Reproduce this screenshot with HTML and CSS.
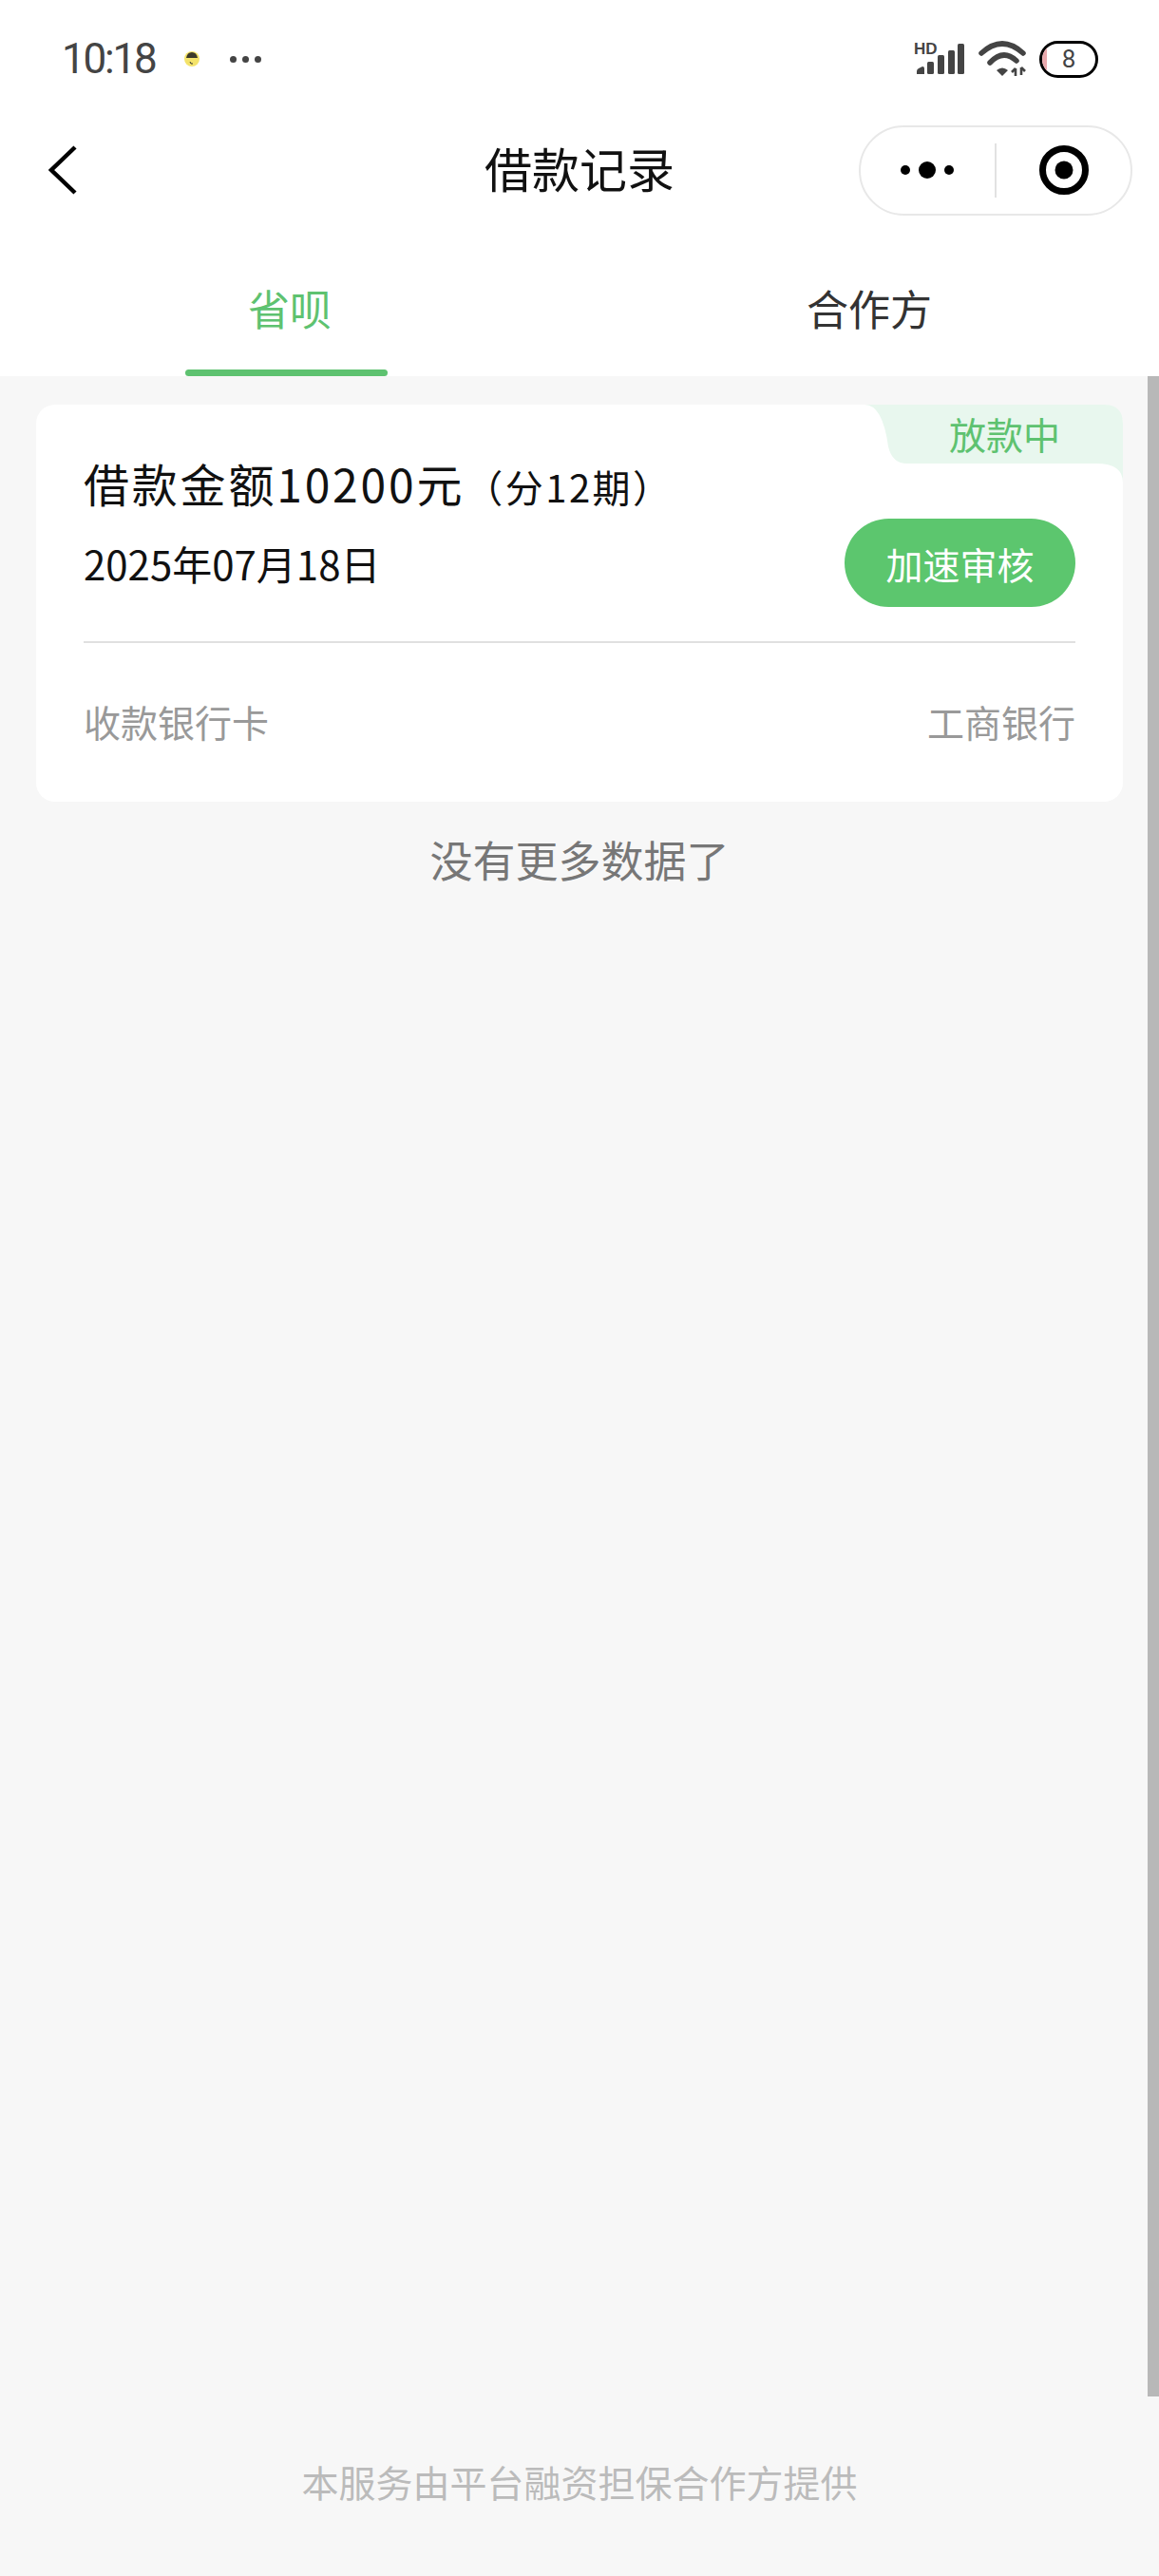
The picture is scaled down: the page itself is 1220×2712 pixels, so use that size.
FILE: index.html
```html
<!DOCTYPE html>
<html lang="zh-CN">
<head>
    <meta charset="UTF-8">
    <meta name="viewport" content="width=device-width, initial-scale=1.0">
    <title>借款记录</title>
    <link rel="stylesheet" href="styles.css">
</head>
<body>
    <div class="page">
        <div class="status-bar">
            <div class="status-left">
                <span class="time">10:18</span>
                <svg class="app-icon" width="18" height="18" viewBox="0 0 18 18">
                    <circle cx="9" cy="9" r="8" fill="#f4e36a"/>
                    <path d="M3 8 Q4 2 9 2 Q14 2 15 8 Z" fill="#3d3a2a"/>
                    <path d="M7 12 L8 14 L10 14" fill="none" stroke="#333" stroke-width="1"/>
                </svg>
                <span class="status-dots"><i></i><i></i><i></i></span>
            </div>
            <div class="status-right">
                <svg width="54" height="42" viewBox="0 -3 54 42">
                    <text x="0" y="13" class="hd-text">HD</text>
                    <path d="M3 34 V31 Q3 29 5 28 L9 26 Q11 26 11 28 V34 Z" fill="#444"/>
                    <rect x="14" y="21" width="7" height="13" rx="1.5" fill="#444"/>
                    <rect x="25" y="14" width="7" height="20" rx="1.5" fill="#444"/>
                    <rect x="36" y="9" width="7" height="25" rx="1.5" fill="#444"/>
                    <rect x="46" y="2" width="7" height="32" rx="1.5" fill="#444"/>
                </svg>
                <svg width="50" height="38" viewBox="0 0 50 38">
                    <path d="M3 13 Q25 -7 47 13" fill="none" stroke="#444" stroke-width="5.5" stroke-linecap="round"/>
                    <path d="M12 23 Q26 8 40 21" fill="none" stroke="#444" stroke-width="5.5" stroke-linecap="round"/>
                    <path d="M19 31 Q25 26 31 31 L25 37 Z" fill="#444"/>
                    <path d="M39 29 V37 M35 33 L39 29 M45 28 V36 M45 28 L49 32" fill="none" stroke="#444" stroke-width="2.6"/>
                </svg>
                <div class="battery">8</div>
            </div>
        </div>

        <div class="nav-bar">
            <div class="nav-left">
                <svg width="32" height="52" viewBox="0 0 32 52">
                    <path d="M29 2 L4 26 L29 50" fill="none" stroke="#000" stroke-width="4.5"/>
                </svg>
            </div>
            <h1 class="nav-title">借款记录</h1>
            <div class="nav-right">
                <div class="capsule">
                    <div class="capsule-cell">
                        <svg width="60" height="20" viewBox="0 0 60 20">
                            <circle cx="6" cy="10" r="5" fill="#000"/>
                            <circle cx="29" cy="10" r="9" fill="#000"/>
                            <circle cx="52" cy="10" r="5" fill="#000"/>
                        </svg>
                    </div>
                    <div class="capsule-line"></div>
                    <div class="capsule-cell">
                        <svg width="54" height="54" viewBox="0 0 54 54">
                            <circle cx="27" cy="27" r="22.5" fill="none" stroke="#000" stroke-width="7"/>
                            <circle cx="27" cy="27" r="9.5" fill="#000"/>
                        </svg>
                    </div>
                </div>
            </div>
        </div>

        <div class="tabs">
            <div class="tab active">省呗</div>
            <div class="tab">合作方</div>
        </div>

        <div class="content">
            <div class="card">
                <div class="card-tag">
                    <svg class="card-tag-bg" width="272" height="82" viewBox="0 0 272 82">
                        <path d="M0 0 H252 Q272 0 272 20 V82 Q272 62 244 62 H45 Q29 62 25 44 Q19 0 0 0 Z" fill="#e8f7ee"/>
                    </svg>
                    <span class="card-tag-text">放款中</span>
                </div>
                <div class="loan-title">借款金额10200元<span class="loan-term">（分12期）</span></div>
                <div class="loan-row">
                    <span class="loan-date">2025年07月18日</span>
                    <button class="speed-btn">加速审核</button>
                </div>
                <div class="card-line"></div>
                <div class="bank-row">
                    <span>收款银行卡</span>
                    <span>工商银行</span>
                </div>
            </div>
            <p class="no-more">没有更多数据了</p>
            <p class="footer-note">本服务由平台融资担保合作方提供</p>
            <div class="scroll-thumb"></div>
        </div>
    </div>
</body>
</html>
```

FILE: styles.css
```css
* {
    margin: 0;
    padding: 0;
    box-sizing: border-box;
}

body {
    background-color: #fff;
    font-family: "Noto Sans CJK SC", "Noto Sans", sans-serif;
}

.page {
    width: 1220px;
    height: 2712px;
    display: flex;
    flex-direction: column;
    overflow: hidden;
}

.status-bar {
    height: 124px;
    flex-shrink: 0;
    display: flex;
    justify-content: space-between;
    align-items: center;
    padding: 0 64px 0 65px;
}

.status-left {
    display: flex;
    align-items: center;
}

.time {
    font-family: Roboto, sans-serif;
    font-size: 44px;
    letter-spacing: -2.2px;
    color: #444;
    line-height: 50px;
    width: 128px;
}

.status-dots {
    display: flex;
    gap: 6px;
    margin-left: 31px;
}

.status-dots i {
    width: 7px;
    height: 7px;
    border-radius: 50%;
    background-color: #444;
}

.status-right {
    display: flex;
    align-items: center;
    gap: 14px;
}

.hd-text {
    font-family: "Liberation Sans", sans-serif;
    font-size: 17px;
    font-weight: 700;
    fill: #444;
}

.battery {
    position: relative;
    width: 62px;
    height: 39px;
    border: 3px solid #000;
    border-radius: 20px;
    font-family: Roboto, sans-serif;
    font-size: 26px;
    color: #444;
    line-height: 33px;
    text-align: center;
    overflow: hidden;
}

.battery::before {
    content: "";
    position: absolute;
    left: 0;
    top: 0;
    bottom: 0;
    width: 5px;
    background-color: #e9a9ad;
}

.nav-bar {
    height: 110px;
    flex-shrink: 0;
    display: grid;
    grid-template-columns: 1fr auto 1fr;
    align-items: center;
}

.nav-left {
    display: flex;
    padding-left: 50px;
}

.nav-title {
    padding-bottom: 6px;
    font-size: 50px;
    font-weight: 400;
    color: #111;
    line-height: 70px;
}

.nav-right {
    display: flex;
    justify-content: flex-end;
    padding-right: 28px;
}

.capsule {
    width: 288px;
    height: 95px;
    display: flex;
    align-items: center;
    border: 2px solid #e8e8e8;
    border-radius: 48px;
}

.capsule-cell {
    flex: 1;
    display: flex;
    justify-content: center;
    align-items: center;
}

.capsule-line {
    width: 2px;
    height: 57px;
    background-color: #e2e2e2;
}

.tabs {
    height: 162px;
    flex-shrink: 0;
    display: flex;
    background-color: #fff;
}

.tab {
    position: relative;
    flex: 1;
    padding-top: 60px;
    font-size: 44px;
    line-height: 60px;
    color: #333;
    text-align: center;
}

.tab.active {
    color: #5ec270;
}

.tab.active::after {
    content: "";
    position: absolute;
    left: 195px;
    bottom: 0;
    width: 213px;
    height: 7px;
    border-radius: 4px;
    background-color: #5ec270;
}

.content {
    position: relative;
    flex: 1;
    display: flex;
    flex-direction: column;
    padding: 30px 38px 0;
    background-color: #f7f7f7;
}

.card {
    position: relative;
    padding: 52px 50px 55px;
    background-color: #fff;
    border-radius: 20px;
}

.card-tag {
    position: absolute;
    top: 0;
    right: 0;
}

.card-tag-bg {
    display: block;
}

.card-tag-text {
    position: absolute;
    top: 1px;
    right: 66px;
    font-size: 39px;
    line-height: 58px;
    color: #5ec270;
    white-space: nowrap;
}

.loan-title {
    font-size: 48px;
    line-height: 60px;
    letter-spacing: 2.8px;
    color: #111;
}

.loan-term {
    font-size: 40px;
    letter-spacing: 2.5px;
}

.loan-row {
    display: flex;
    justify-content: space-between;
    align-items: center;
    margin-top: 4px;
}

.loan-date {
    font-size: 42px;
    color: #111;
}

.speed-btn {
    width: 243px;
    height: 93px;
    border: none;
    border-radius: 47px;
    background-color: #5cc66e;
    color: #fff;
    font-family: inherit;
    font-size: 39px;
}

.card-line {
    height: 2px;
    margin-top: 36px;
    background-color: #e0e0e0;
}

.bank-row {
    display: flex;
    justify-content: space-between;
    margin-top: 52px;
    font-size: 39px;
    line-height: 60px;
    color: #999;
}

.no-more {
    margin-top: 29px;
    font-size: 45px;
    line-height: 64px;
    color: #777;
    text-align: center;
}

.footer-note {
    margin-top: auto;
    padding-bottom: 73px;
    font-size: 39px;
    line-height: 54px;
    color: #bbb;
    text-align: center;
}

.scroll-thumb {
    position: absolute;
    top: 0;
    right: 0;
    width: 12px;
    height: 2127px;
    background-color: #b8b8b8;
}
```
